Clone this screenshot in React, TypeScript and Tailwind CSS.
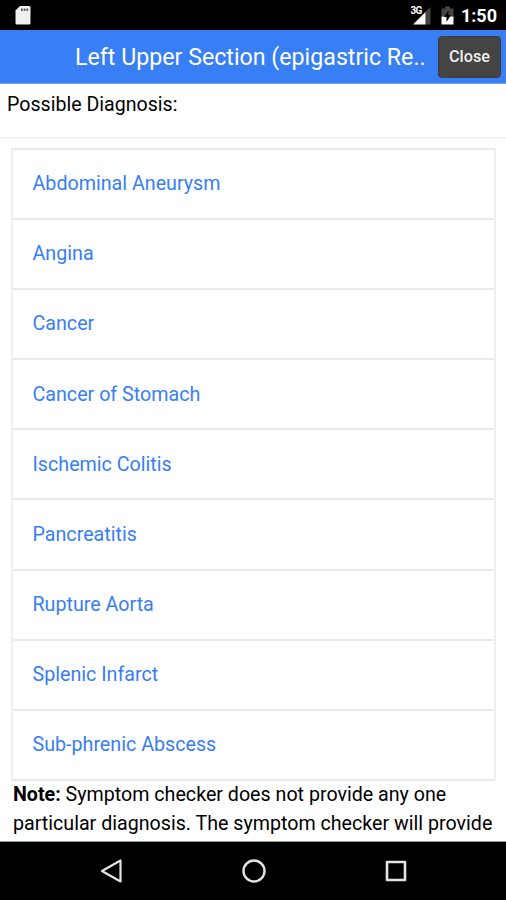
const diagnoses = [
  'Abdominal Aneurysm',
  'Angina',
  'Cancer',
  'Cancer of Stomach',
  'Ischemic Colitis',
  'Pancreatitis',
  'Rupture Aorta',
  'Splenic Infarct',
  'Sub-phrenic Abscess',
];

function StatusBar() {
  return (
    <div className="flex h-[30px] shrink-0 items-start bg-black pl-[14px] pr-[9px] text-white">
      {/* SD card */}
      <svg className="mt-[5px] h-5 w-[18px]" viewBox="0 0 18 20">
        <path d="M6 1h9a1.500 1.500 0 0 1 1.500 1.500v15.500a1.500 1.500 0 0 1-1.500 1.500H3A1.500 1.500 0 0 1 1.500 18V5.500Z" fill="#f0f0f0" />
        <path d="M7 3.500h1.700v2.500H7zM9.700 3.500h1.700v2.500H9.700zM12.400 3.500h1.700v2.500h-1.700z" fill="#555" />
      </svg>
      <div className="ml-auto flex items-start">
        <span className="mt-[5px] text-[10px] leading-[11px] font-bold tracking-[-0.5px]">3G</span>
        <svg className="-ml-[9px] mt-[6px] h-[19px] w-[18px]" viewBox="0 0 18 19">
          <path d="M12.500 5.500 17.500 1v17.500h-5Z" fill="#444" />
          <path d="M12.500 6v12.500H0Z" fill="#fff" />
        </svg>
        <svg className="ml-[10px] mt-[6px] h-[19px] w-[13px]" viewBox="0 0 13 19">
          <path d="M4 0.500h5V2.500h3.500v8H0.500v-8H4Z" fill="#444" />
          <path d="M0.500 10.500h12v8h-12Z" fill="#fff" />
          <path d="M7.500 4.500v4.500H10L5.500 16v-5H3Z" fill="#000" />
        </svg>
        <span className="ml-[7px] mt-[5px] text-[18px] leading-[22px] font-bold">1:50</span>
      </div>
    </div>
  );
}

function Header() {
  return (
    <header className="flex h-[54px] shrink-0 items-center border-b border-[#709ff9] bg-[#387ef5] pr-[5px] pl-[75px] text-white">
      <h1 className="pt-px text-[23.200px] font-normal whitespace-nowrap">Left Upper Section (epigastric Re..</h1>
      <button className="ml-auto h-[42px] w-[63px] rounded-[4px] border border-[#3d3d3d] bg-[#444] pt-[2px] text-[16.200px] font-medium text-[#eee]">
        Close
      </button>
    </header>
  );
}

function NavigationBar() {
  return (
    <nav className="flex h-[58px] shrink-0 items-center justify-center gap-[118px] bg-black pl-px">
      <svg className="h-6 w-6" viewBox="0 0 24 24" fill="none" stroke="#e4e4e4" strokeWidth="2.200" strokeLinejoin="round">
        <path d="M20.500 1.500v21L2 12Z" />
      </svg>
      <svg className="h-6 w-6" viewBox="0 0 24 24" fill="none" stroke="#e4e4e4" strokeWidth="2.400">
        <circle cx="12" cy="12" r="10.500" />
      </svg>
      <svg className="h-6 w-6" viewBox="0 0 24 24" fill="none" stroke="#e4e4e4" strokeWidth="2.600" strokeLinejoin="round">
        <rect x="3" y="3" width="18" height="18" />
      </svg>
    </nav>
  );
}

export default function App() {
  return (
    <div className="flex h-[900px] w-[506px] flex-col overflow-hidden bg-white font-['Roboto',sans-serif] text-black">
      <StatusBar />
      <Header />
      <main className="flex min-h-0 flex-1 flex-col overflow-hidden border-b border-[#999]">
        <p className="h-[55px] shrink-0 border-b-2 border-[#f4f4f4] pt-[7px] pl-[7px] text-[19.600px] leading-[28px]">
          Possible Diagnosis:
        </p>
        <ul className="mt-[9px] mr-[10px] ml-[11px] shrink-0 border-x-2 border-t-2 border-x-[#efefef] border-t-[#e9e9e9]">
          {diagnoses.map((name) => (
            <li
              key={name}
              className="flex h-[70.100px] items-center border-b-2 border-[#e9e9e9] pl-[19.500px] text-[19.680px] text-[#387ef5]"
            >
              {name}
            </li>
          ))}
        </ul>
        <p className="-mt-px shrink-0 pl-[13px] text-[19.650px] leading-[29.500px] whitespace-nowrap">
          <b>Note:</b> Symptom checker does not provide any one
          <br />
          particular diagnosis. The symptom checker will provide
        </p>
      </main>
      <NavigationBar />
    </div>
  );
}
